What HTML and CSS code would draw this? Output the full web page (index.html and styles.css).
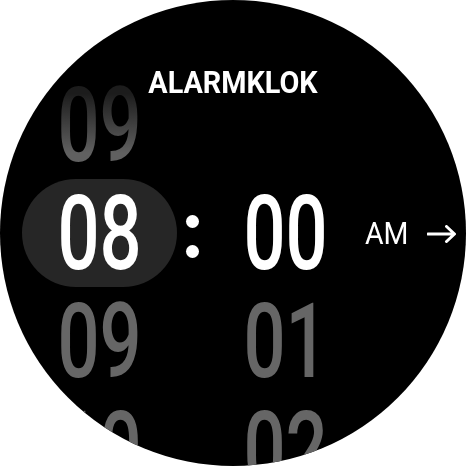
FILE: index.html
```html
<!DOCTYPE html>
<html>
<head>
<meta charset="utf-8">
<link rel="stylesheet" href="styles.css">
</head>
<body>
<div class="face">
  <div class="title">ALARMKLOK</div>
  <div class="picker">
    <div class="col hours">
      <div class="cell fade"><span class="num">09</span></div>
      <div class="cell active"><span class="num">08</span></div>
      <div class="cell dim"><span class="num">09</span></div>
      <div class="cell dim"><span class="num">10</span></div>
    </div>
    <div class="colon">
      <span class="dot"></span>
      <span class="dot"></span>
    </div>
    <div class="col minutes">
      <div class="cell"></div>
      <div class="cell active-min"><span class="num">00</span></div>
      <div class="cell dim"><span class="num">01</span></div>
      <div class="cell dim"><span class="num">02</span></div>
    </div>
    <div class="ampm">
      <span class="am">AM</span>
      <svg class="arrow" width="30" height="18" viewBox="0 0 30 18">
        <path d="M1 9 H27 M19.5 1.5 L27.5 9 L19.5 16.5" fill="none" stroke="#fff" stroke-width="3" stroke-linecap="round" stroke-linejoin="round"/>
      </svg>
    </div>
  </div>
</div>
</body>
</html>
```

FILE: styles.css
```css
html, body {
  margin: 0;
  padding: 0;
  background: #ffffff;
}

.face {
  position: relative;
  width: 466px;
  height: 466px;
  border-radius: 50%;
  background: #000000;
  overflow: hidden;
  box-sizing: border-box;
  padding-top: 71px;
  font-family: Roboto, "Noto Sans", sans-serif;
}

.title {
  position: absolute;
  top: 66px;
  left: 0;
  right: 0;
  text-align: center;
  color: #ffffff;
  font-weight: 700;
  font-size: 32px;
  line-height: 32px;
  transform: scaleX(0.9);
  z-index: 2;
}

.picker {
  display: flex;
  align-items: flex-start;
  padding-left: 22px;
}

.col {
  display: flex;
  flex-direction: column;
  width: 155px;
}

.cell {
  height: 108px;
  display: flex;
  justify-content: center;
  align-items: center;
}

.num {
  display: block;
  font-size: 103px;
  line-height: 90px;
  height: 90px;
  font-weight: 500;
  color: #ffffff;
  transform: scaleX(0.72);
  padding-top: 1px;
}

.active {
  background: #262626;
  border-radius: 54px;
}

.dim .num {
  color: #666666;
}

.fade .num {
  color: transparent;
  background: linear-gradient(to bottom, #1c1c1c 15%, #606060 80%);
  -webkit-background-clip: text;
  background-clip: text;
}

.colon {
  width: 31px;
  height: 108px;
  margin-top: 108px;
  display: flex;
  flex-direction: column;
  align-items: center;
  justify-content: center;
  gap: 17px;
  padding-top: 6px;
  box-sizing: border-box;
}

.dot {
  width: 13px;
  height: 13px;
  border-radius: 50%;
  background: #ffffff;
}

.ampm {
  height: 108px;
  margin-top: 108px;
  margin-left: 2px;
  display: flex;
  align-items: center;
  gap: 19px;
}

.am {
  color: #ffffff;
  font-size: 31px;
  line-height: 31px;
  font-weight: 400;
  transform: scaleX(0.92);
  transform-origin: left center;
  margin-right: -4px;
}

.arrow {
  display: block;
  margin-top: 2px;
}
```
